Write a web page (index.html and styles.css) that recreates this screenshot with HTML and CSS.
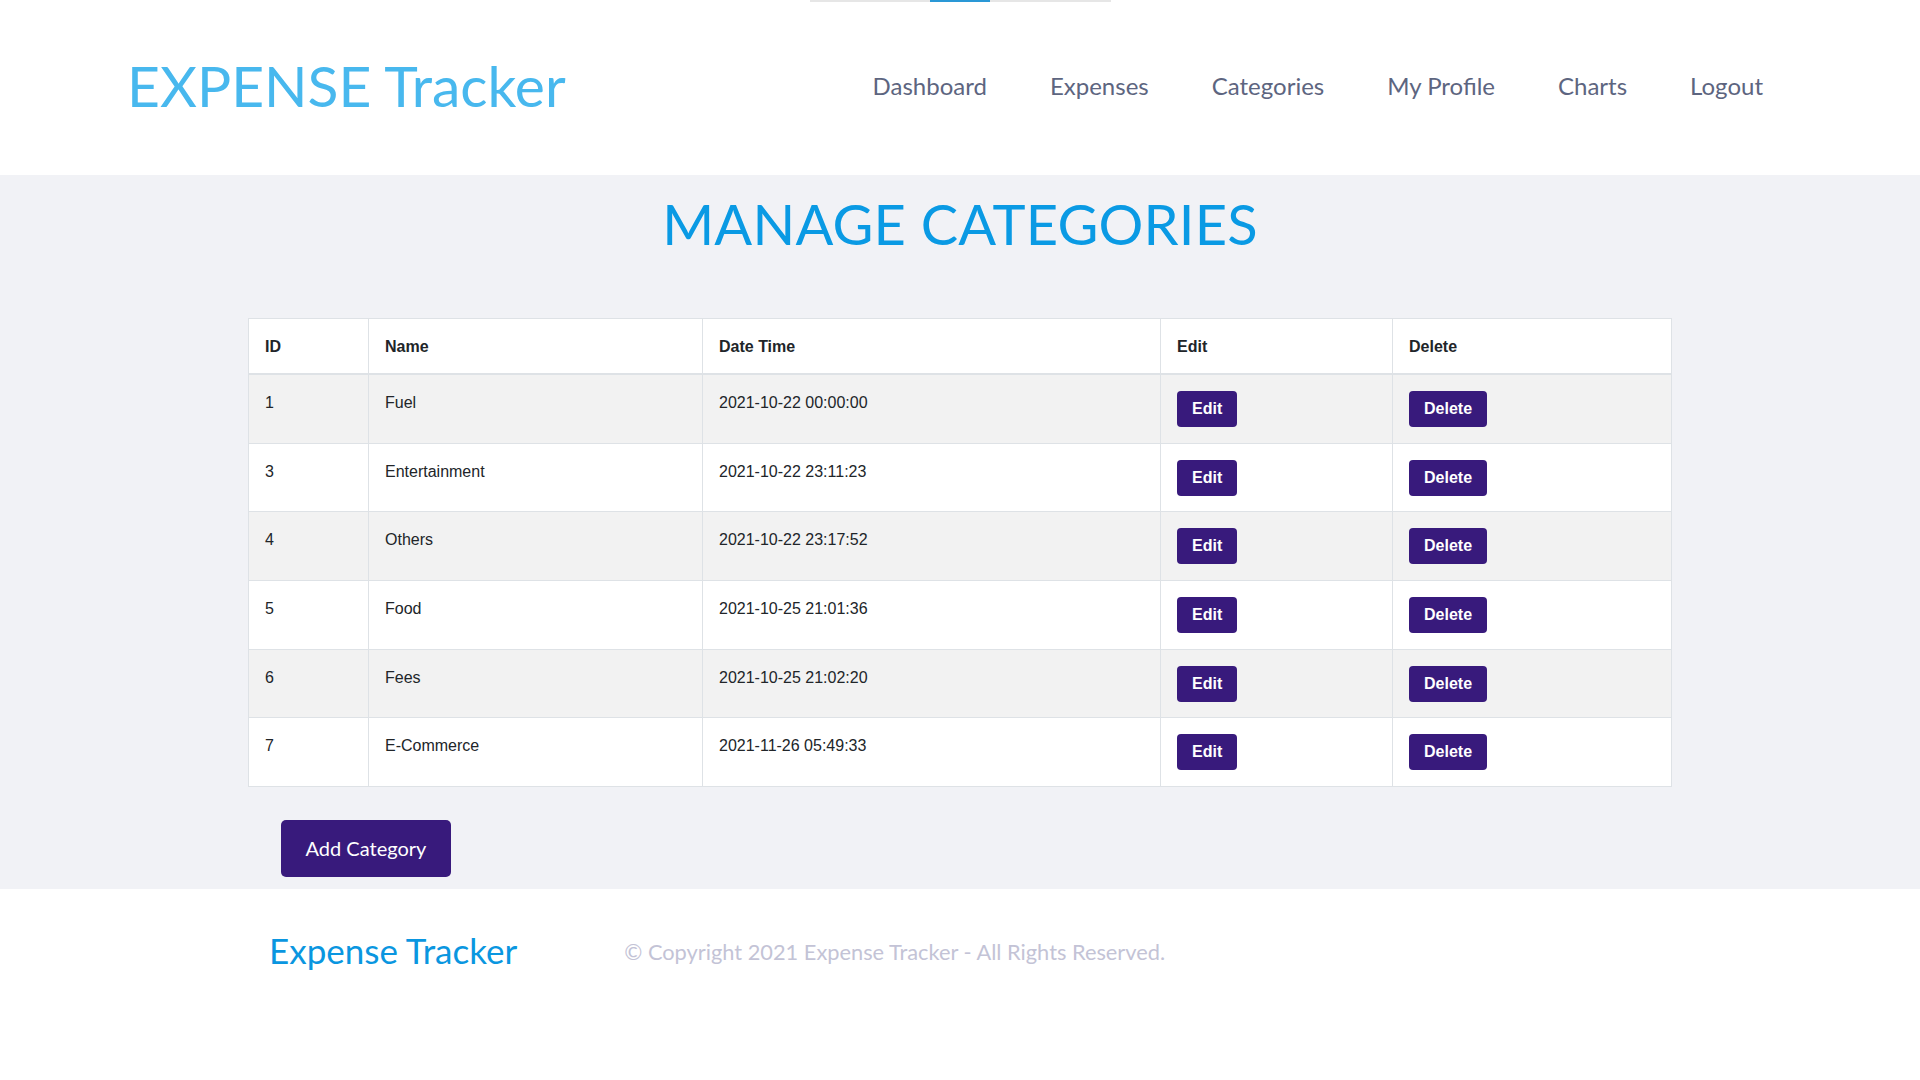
FILE: index.html
```html
<!DOCTYPE html>
<html lang="en">
<head>
<meta charset="utf-8">
<title>Manage Categories - Expense Tracker</title>
<link rel="stylesheet" href="styles.css">
</head>
<body>
<div class="topline"><span class="topline-seg"></span></div>
<header class="site-header">
  <a class="brand" href="#">EXPENSE Tracker</a>
  <nav class="main-nav">
    <a href="#">Dashboard</a>
    <a href="#">Expenses</a>
    <a href="#">Categories</a>
    <a href="#">My Profile</a>
    <a href="#">Charts</a>
    <a href="#">Logout</a>
  </nav>
</header>
<main class="content">
  <h1 class="page-title">MANAGE CATEGORIES</h1>
  <table class="data-table">
    <colgroup>
      <col class="c-id"><col class="c-name"><col class="c-date"><col class="c-edit"><col class="c-del">
    </colgroup>
    <thead>
      <tr><th>ID</th><th>Name</th><th>Date Time</th><th>Edit</th><th>Delete</th></tr>
    </thead>
    <tbody>
      <tr><td>1</td><td>Fuel</td><td>2021-10-22 00:00:00</td><td><a class="btn" href="#">Edit</a></td><td><a class="btn" href="#">Delete</a></td></tr>
      <tr><td>3</td><td>Entertainment</td><td>2021-10-22 23:11:23</td><td><a class="btn" href="#">Edit</a></td><td><a class="btn" href="#">Delete</a></td></tr>
      <tr><td>4</td><td>Others</td><td>2021-10-22 23:17:52</td><td><a class="btn" href="#">Edit</a></td><td><a class="btn" href="#">Delete</a></td></tr>
      <tr><td>5</td><td>Food</td><td>2021-10-25 21:01:36</td><td><a class="btn" href="#">Edit</a></td><td><a class="btn" href="#">Delete</a></td></tr>
      <tr><td>6</td><td>Fees</td><td>2021-10-25 21:02:20</td><td><a class="btn" href="#">Edit</a></td><td><a class="btn" href="#">Delete</a></td></tr>
      <tr><td>7</td><td>E-Commerce</td><td>2021-11-26 05:49:33</td><td><a class="btn" href="#">Edit</a></td><td><a class="btn" href="#">Delete</a></td></tr>
    </tbody>
  </table>
  <div class="actions">
    <a class="btn-add" href="#">Add Category</a>
  </div>
</main>
<footer class="site-footer">
  <span class="footer-brand">Expense Tracker</span>
  <span class="copyright">© Copyright 2021 Expense Tracker - All Rights Reserved.</span>
</footer>
</body>
</html>
```
FILE: styles.css
```css
* { box-sizing: border-box; }
html, body { margin: 0; padding: 0; }
body {
  background: #ffffff;
  font-family: Lato, "Open Sans", sans-serif;
  color: #212529;
}
a { text-decoration: none; }

.topline {
  display: flex;
  justify-content: center;
  height: 2px;
}
.topline::before {
  content: "";
  display: block;
  width: 120px;
  background: #e6e6e6;
}
.topline::after {
  content: "";
  display: block;
  width: 121px;
  background: #e6e6e6;
}
.topline-seg {
  display: block;
  width: 60px;
  background: #2a98d6;
}

.site-header {
  height: 173px;
  display: flex;
  align-items: center;
  justify-content: space-between;
  padding: 0 157px 6px 127px;
}
.brand {
  font-size: 57px;
  color: #48b8ee;
  font-weight: 400;
  line-height: 1;
}
.main-nav {
  display: flex;
  gap: 63px;
}
.main-nav a {
  font-size: 24px;
  color: #5d6580;
  line-height: 1;
}

.content {
  background: #f1f2f6;
  padding: 15px 0 12px;
}
.page-title {
  margin: 0 0 61px;
  text-align: center;
  font-size: 56px;
  font-weight: 400;
  line-height: 1.2;
  color: #0a9ae4;
  letter-spacing: 0.2px;
}

.data-table {
  width: 1423px;
  margin: 0 auto;
  border-collapse: collapse;
  table-layout: fixed;
  background: #ffffff;
  font-family: "Liberation Sans", Arial, sans-serif;
  font-size: 16px;
  line-height: 1.5;
}
.c-id { width: 120px; }
.c-name { width: 334px; }
.c-date { width: 458px; }
.c-edit { width: 232px; }
.c-del { width: 279px; }
.data-table th,
.data-table td {
  border: 1px solid #dee2e6;
  padding: 16px 16px 15.6px;
  text-align: left;
  vertical-align: top;
  color: #212529;
}
.data-table th {
  font-weight: 700;
  padding-bottom: 14px;
  border-bottom: 2px solid #dee2e6;
}
.data-table td { font-weight: 400; }
.data-table tbody tr:nth-child(odd) { background: #f2f2f2; }

.btn {
  display: inline-block;
  background: #381a7c;
  color: #ffffff;
  font-weight: 700;
  font-size: 16px;
  line-height: 24px;
  padding: 6px 15px;
  border-radius: 4px;
}

.actions {
  width: 1423px;
  margin: 33px auto 0;
  padding-left: 32px;
}
.btn-add {
  display: inline-block;
  background: #381a7c;
  color: #ffffff;
  font-size: 20px;
  line-height: 25px;
  padding: 16px 25px;
  border-radius: 5px;
}

.site-footer {
  height: 192px;
  display: flex;
  align-items: center;
  padding: 0 0 70px 269px;
  gap: 107px;
}
.footer-brand {
  font-size: 35px;
  color: #0a96e0;
  line-height: 1.2;
}
.copyright {
  font-size: 21.8px;
  color: #c3c3d6;
  line-height: 1.2;
  padding-top: 4px;
}
```
